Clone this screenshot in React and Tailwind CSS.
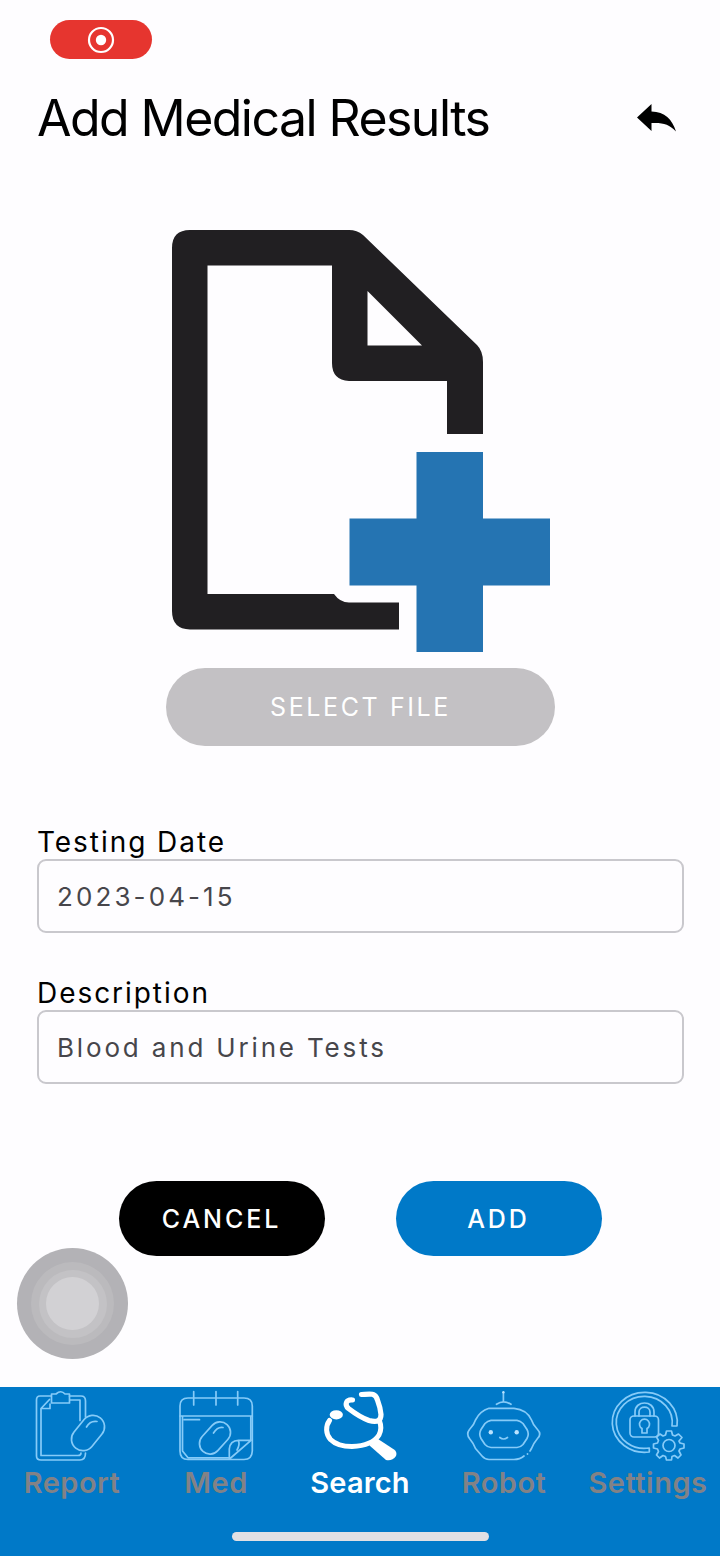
const line = { fill: 'none', stroke: '#86cbf8', strokeWidth: 1.7, strokeLinecap: 'round', strokeLinejoin: 'round' };

function ReportIcon() {
  return (
    <svg className="h-20 w-24" viewBox="24 1385 96 80" {...line}>
      <path d="M51 1396H40Q36.500 1396 36.500 1400V1456Q36.500 1460 41 1460H80Q85.500 1460 85.500 1453M69.500 1396H81Q85.500 1396 85.500 1401V1417" />
      <path d="M49.500 1399.500L41 1408.500V1455.500H78Q81 1455.500 81 1453M70 1400H80V1420.500M41 1408.500H50V1404" />
      <path d="M51.500 1403V1394H56Q61 1389.500 65 1394H69.500V1403Z" />
      <rect x="68.500" y="1421.500" width="39" height="23" rx="11.500" transform="rotate(-51 88 1433)" />
      <path d="M86.500 1427Q90 1420.500 97 1421.500" />
    </svg>
  );
}

function MedIcon() {
  return (
    <svg className="h-20 w-24" viewBox="168 1385 96 80" {...line}>
      <path d="M180 1406Q180 1398 188 1398H244Q252.300 1398 252.300 1406V1451Q252 1459.500 244 1459.500H188Q180 1459.500 180 1451Z" />
      <path d="M180 1416H252.300M182.500 1416.500V1451L188 1457.800H229M250.800 1416.500V1440" />
      <path d="M193.700 1391.500V1405M216 1391.500V1405M237.700 1391.500V1405M184 1419.700H199.500" />
      <rect x="197" y="1427.500" width="36" height="21" rx="10.500" transform="rotate(-48 215 1438)" />
      <path d="M213.500 1433Q217.500 1426.500 223 1427.500M229.300 1459V1449Q230 1440.500 238.500 1440.300H251L229.500 1459M238.500 1440.500Q240 1445 237 1450" />
    </svg>
  );
}

function SearchIcon() {
  return (
    <svg className="h-20 w-24" viewBox="312 1385 96 80" fill="none" stroke="#fff" strokeLinecap="round" strokeLinejoin="round">
      <path d="M329.500 1420.500C325.500 1426 325.500 1434 330.500 1439.500C336 1445 344 1446.500 352 1446.500C364 1446 374 1443 379 1435C381.500 1430 381.500 1426 379.500 1421" strokeWidth="5" />
      <path d="M352.500 1400C345.500 1399.500 344.500 1405 348.500 1408.500C355 1413.500 362 1418 369 1420.500C378 1423 381 1420 381 1414.500C380.500 1407 378.500 1403 376.500 1397.500C374 1393 370 1394 361.500 1394.500" strokeWidth="5.200" />
      <ellipse cx="336.300" cy="1414.800" rx="6.600" ry="4.600" fill="#fff" stroke="none" />
      <path d="M369.500 1445.500L378 1439L394 1449.500Q397.500 1452 396 1456Q392 1461.500 386 1460Z" fill="#fff" stroke="none" />
    </svg>
  );
}

function RobotIcon() {
  return (
    <svg className="h-20 w-24" viewBox="456 1385 96 80" {...line}>
      <path d="M503.400 1393V1402M496.500 1404.300Q503.500 1399.500 511 1404.300" />
      <circle cx="503.400" cy="1392.300" r="1.200" fill="#b9e2ff" stroke="none" />
      <path d="M524 1456Q520 1459.500 514 1459.500H489Q485 1459.500 482 1456L475.500 1448.500Q474 1444 469.500 1438.500Q466 1434 469.500 1429.500Q474 1425 475.500 1420Q480 1411 489 1408.300H514Q527 1409.500 531.500 1420Q533 1425 537.500 1429.500Q542 1434 537.500 1438.500Q533 1444 531.500 1448.500L530 1451" />
      <circle cx="527.500" cy="1454" r="0.900" fill="#86cbf8" stroke="none" />
      <path d="M491 1420.300H517Q520.500 1420.800 523 1423.500L527 1429.500Q529.500 1434 527 1438.500L523 1444.500Q520.500 1447.300 517 1447.500H491Q487.500 1447.300 485 1444.500L481 1438.500Q478.500 1434 481 1429.500L485 1423.500Q487.500 1420.800 491 1420.300Z" />
      <circle cx="490.800" cy="1432.300" r="2.200" fill="#b9e2ff" stroke="none" />
      <circle cx="516.700" cy="1432.300" r="2.200" fill="#b9e2ff" stroke="none" />
      <path d="M499.800 1437.500Q503.500 1440.500 507.500 1437.500" />
    </svg>
  );
}

function SettingsIcon() {
  return (
    <svg className="h-20 w-24" viewBox="600 1385 96 80" {...line}>
      <path d="M677 1426A32.500 30 0 1 0 649.300 1452V1448A28 26 0 1 1 672 1426Z" />
      <rect x="630" y="1416" width="28.500" height="21" rx="4" />
      <path d="M635 1416V1412C635 1400 654 1400 654 1412V1416M639 1416V1412C639 1405.500 650 1405.500 650 1412V1416" />
      <path d="M642 1433V1428.500A5 5 0 1 1 647 1428.500V1433Z" />
      <circle cx="669" cy="1445.500" r="6" />
      <path d="M666.500 1431H671.500L672.500 1435L675 1436L678.500 1434L682 1437.500L679 1441L680 1443L684 1444V1448L680 1449L679 1451L681 1455L678 1458L674.500 1455.500L672 1456.500L671.500 1460H666.500L665.500 1456.500L663 1455.500L659.500 1458L656.500 1455L658.500 1451.500L657.500 1449L653.500 1448V1444L657.500 1443L658.500 1440.500L656.500 1437L660 1434L663 1436L665.500 1435Z" />
    </svg>
  );
}

const tabs = [
  { name: 'Report', Icon: ReportIcon },
  { name: 'Med', Icon: MedIcon },
  { name: 'Search', Icon: SearchIcon, active: true },
  { name: 'Robot', Icon: RobotIcon },
  { name: 'Settings', Icon: SettingsIcon },
];

function Field({ label, value, spacing }) {
  return (
    <label className="block">
      <span className="flex h-9 items-center pt-0.5 text-[28px] leading-9 tracking-[1.950px] text-black">{label}</span>
      <input
        type="text"
        defaultValue={value}
        className={`block h-[74px] w-full rounded-[9px] border-2 border-[#c9c8cd] bg-transparent px-[18px] text-[26px] text-[#47464b] outline-none ${spacing}`}
      />
    </label>
  );
}

export default function App() {
  return (
    <div className="relative flex h-[1556px] w-[720px] flex-col overflow-hidden bg-[#fefdff] font-[Inter,sans-serif]">
      <div className="flex h-[59px] shrink-0 items-end pl-[50px]">
        <div className="flex h-[39px] w-[102px] items-center justify-center rounded-full bg-[#e6352f]">
          <svg className="size-7" viewBox="0 0 28 28">
            <circle cx="14" cy="14" r="12" fill="none" stroke="#fff" strokeWidth="2.200" />
            <circle cx="14" cy="14" r="5.200" fill="#fff" />
          </svg>
        </div>
      </div>

      <header className="flex h-[117px] shrink-0 items-center justify-between pt-px pr-11 pl-[37px]">
        <h1 className="text-[50px] leading-none tracking-[-1.550px] text-black">Add Medical Results</h1>
        <svg className="h-7 w-[39px]" viewBox="0 0 39 28">
          <path d="M0 13.500L14.500 0V7.500C28 8 35 15 39 27.500C32 20 26 18.500 14.500 19V27Z" />
        </svg>
      </header>

      <main className="flex grow flex-col">
        <section className="flex h-[570px] shrink-0 flex-col items-center pt-[54px] pl-px">
          <svg className="ml-px h-[423px] w-[378px]" viewBox="172 230 378 423">
            <path
              fill="#211f22"
              fillRule="evenodd"
              d="M190 230H349Q357 230 363 235L477 345Q483 351 483 362V434H447V381H349Q332 380 332 363V265.500H207.500V594H334Q340 602.500 349 602.500H399V629.500H190Q172 629 172 611V248Q172 230 190 230ZM367.500 291V345.500H422Z"
            />
            <path fill="#2574b2" d="M416.500 452H483V518.500H550V585.500H483V652H416.500V585.500H349.500V518.500H416.500Z" />
          </svg>
          <button className="mt-[15px] h-[78px] w-[389px] shrink-0 rounded-full bg-[#c3c1c4] pt-0.5 text-[25px] tracking-[2.600px] text-white">
            SELECT FILE
          </button>
        </section>

        <form className="flex flex-col gap-[41px] pt-[77px] pr-9 pl-[37px]">
          <Field label="Testing Date" value="2023-04-15" spacing="tracking-[3.100px]" />
          <Field label="Description" value="Blood and Urine Tests" spacing="tracking-[2.840px]" />
        </form>

        <div className="mt-[97px] flex justify-center gap-[71px]">
          <button className="h-[75px] w-[206px] rounded-full bg-black pt-0.5 text-[25px] font-medium tracking-[2.900px] text-white">CANCEL</button>
          <button className="h-[75px] w-[206px] rounded-full bg-[#0079c8] pt-0.5 text-[25px] font-medium tracking-[2.900px] text-white">ADD</button>
        </div>
      </main>

      <nav className="flex h-[169px] shrink-0 flex-col items-center bg-[#0079c8]">
        <ul className="-mt-0.5 grid w-full grid-cols-5">
          {tabs.map(({ name, Icon, active }) => (
            <li key={name} className="flex min-w-0 flex-col items-center">
              <Icon />
              <span className={`-mt-0.5 text-[29px] leading-10 font-semibold ${active ? 'tracking-[0.150px] text-white' : 'tracking-[0.500px] text-[#828286]'}`}>{name}</span>
            </li>
          ))}
        </ul>
        <div className="mt-[29px] h-[9px] w-[257px] rounded-full bg-[#e0e0e4]" />
      </nav>

      <div className="absolute top-[1248px] left-[17px] flex size-[111px] items-center justify-center rounded-full bg-[#b3b2b6]">
        <div className="flex size-[83px] items-center justify-center rounded-full bg-[#bbbabd]">
          <div className="flex size-[68px] items-center justify-center rounded-full bg-[#c3c2c5]">
            <div className="size-[53px] rounded-full bg-[#d2d1d4]" />
          </div>
        </div>
      </div>
    </div>
  );
}
